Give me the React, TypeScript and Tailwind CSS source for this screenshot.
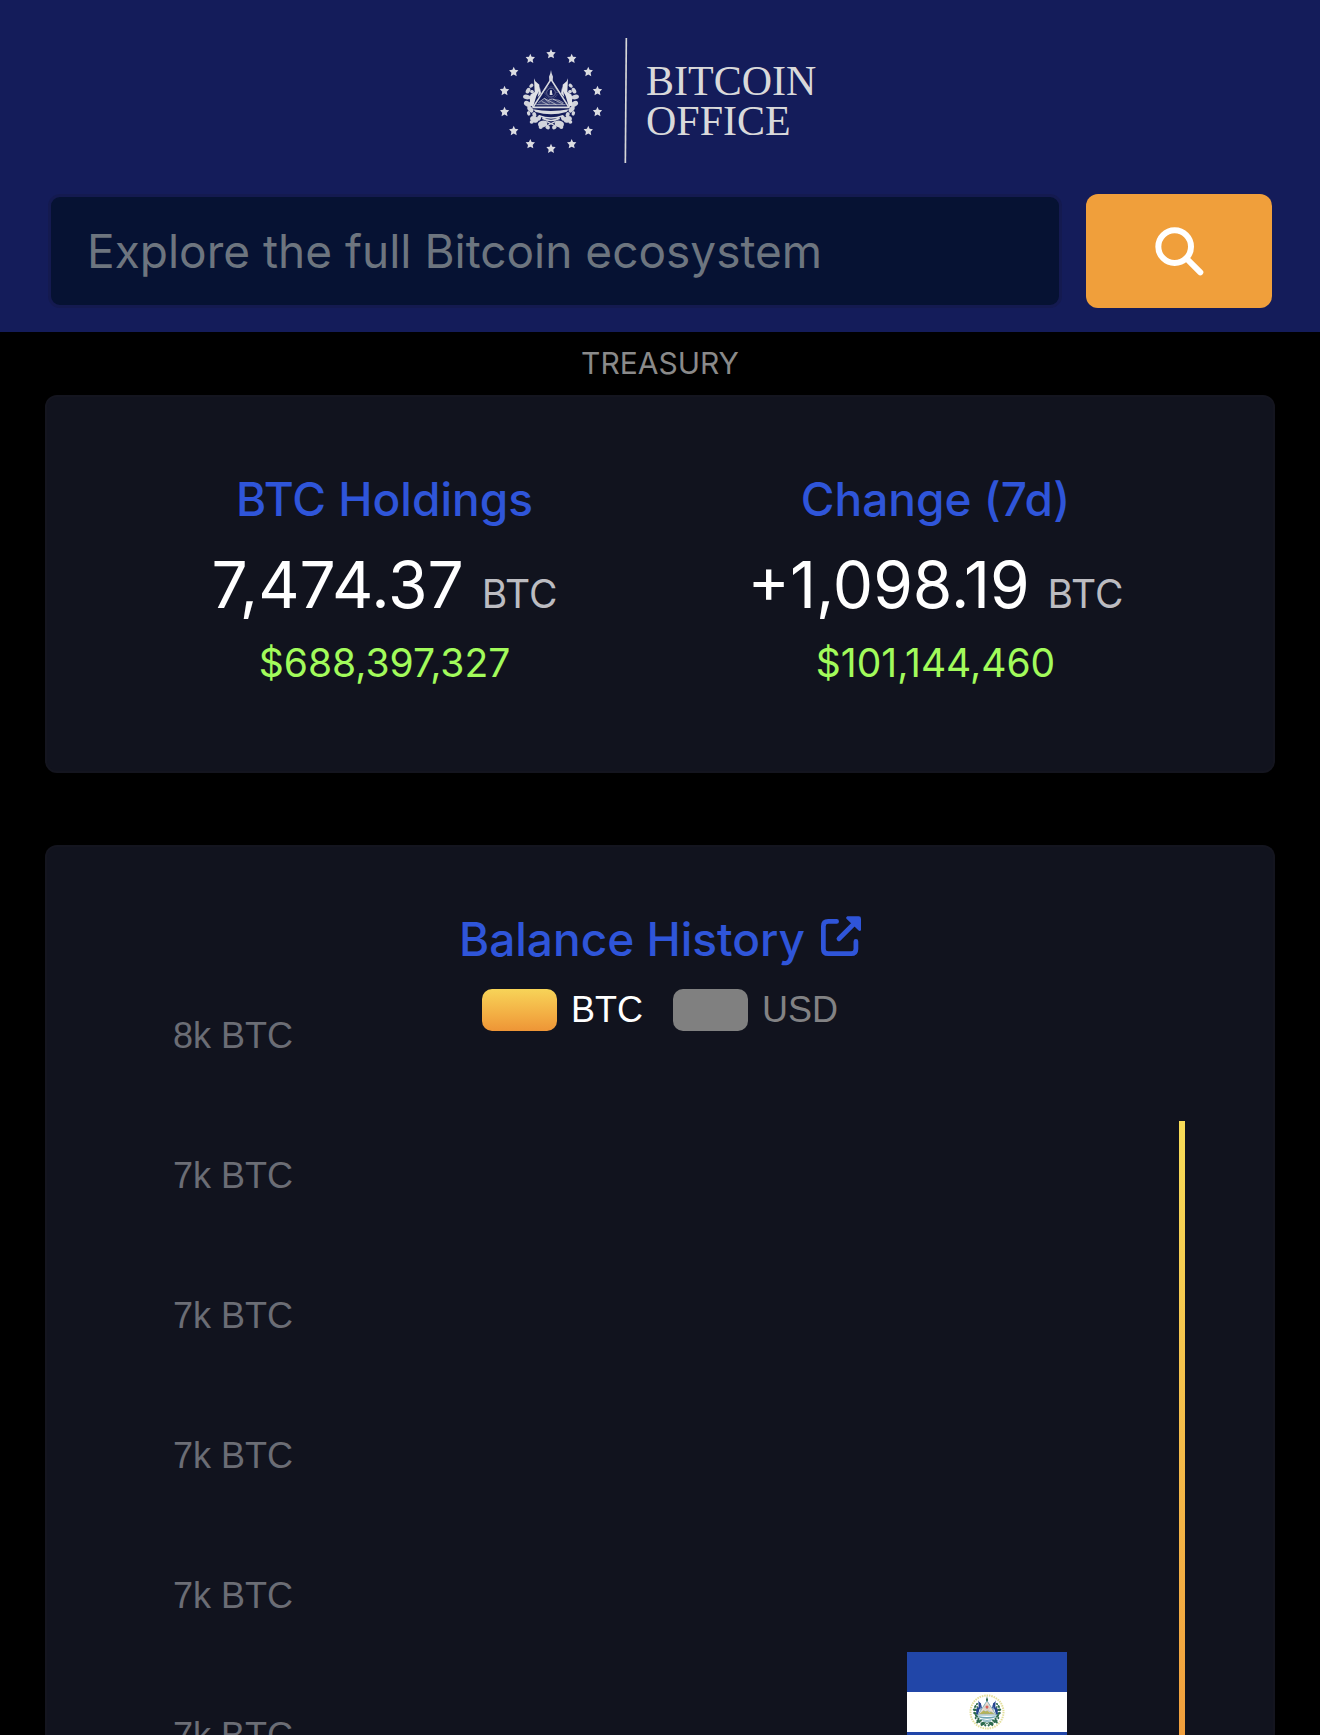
import React from "react";

const STAR =
  "M0 -15 L4 -6 L14 -5 L7 3 L9 13 L0 8 L-9 13 L-7 3 L-14 -5 L-4 -6 Z";

const LEAVES: [number, number, number, number, number][] = [
  [-59, -47, 7, 5, -40],
  [-69, -32, 9, 6, -60],
  [-57, -29, 6, 5, 20],
  [-73, -13, 11, 7, 10],
  [-61, -10, 6, 5, 60],
  [-70, 8, 12, 8, 30],
  [-62, 24, 11, 7, 50],
  [-67, 36, 7, 5, 70],
  [-50, 40, 8, 6, 70],
  [-50, 54, 13, 9, 20],
  [-58, 62, 6, 5, 0],
  [-36, 50, 6, 8, 20],
  [-25, 68, 14, 10, -15],
  [-31, 77, 6, 6, 0],
  [-10, 78, 7, 6, 30],
];

interface ArmsColors {
  leaf: string;
  flag: string;
  line: string;
  field: string;
  land: string;
}

function CoatOfArms({ leaf, flag, line, field, land }: ArmsColors) {
  const half = (
    <g>
      {LEAVES.map(([cx, cy, rx, ry, a], i) => (
        <ellipse key={i} cx={cx} cy={cy} rx={rx} ry={ry} fill={leaf} transform={`rotate(${a} ${cx} ${cy})`} />
      ))}
      <path d="M-51 -69 L-47 -60 L-35 -50 L-36 -30 L-44 -16 L-54 18 L-64 10 L-62 -20 L-49 -28 Z" fill={flag} />
      <path d="M-34 -46 L-30 -24 L-40 -12 Z" fill={flag} />
    </g>
  );
  return (
    <g>
      {half}
      <g transform="scale(-1 1)">{half}</g>
      <path d="M0 -94 L2 -84 L6 -74 L5 -62 L-5 -62 L-6 -74 L-2 -84 Z" fill={leaf} />
      <path d="M0 -66 L54 18 L-54 18 Z" fill={field} stroke={line} strokeWidth="5" strokeLinejoin="round" />
      <circle cx="0" cy="-26" r="13" fill="none" stroke={line} strokeWidth="2" opacity="0.6" />
      <circle cx="0" cy="-26" r="18" fill="none" stroke={line} strokeWidth="6" strokeDasharray="1 3" opacity="0.5" />
      <path d="M-3 -33 L3 -33 L3 -27 L5 -19 L-4 -19 Z" fill={line} />
      <path d="M-35 3 L-20 -9 L-8 -3 L2 -8 L14 3 L24 -2 L44 12 L-46 12 Z" fill={land} />
      <path
        d="M-38 4 L-20 -9 L-4 5 M-20 -9 L16 10 M-8 -4 L4 -7 L36 8 M6 -6 L24 -3 L38 5 M-44 10 H44 M-28 0 L-8 10"
        fill="none"
        stroke={line}
        strokeWidth="2.500"
        opacity="0.8"
      />
      <path d="M-54 24 Q0 34 54 24 L46 32 Q0 46 -46 32 Z" fill={line} />
      <path d="M-36 43 Q0 57 36 43 M-26 51 Q0 64 26 51" fill="none" stroke={line} strokeWidth="5" />
      <path d="M-14 60 L14 74 M14 60 L-14 74" stroke={leaf} strokeWidth="4" />
    </g>
  );
}

function LogoMark() {
  return (
    <svg viewBox="30 24 384 375" className="h-[125px] w-32" aria-hidden="true">
      {Array.from({ length: 14 }, (_, i) => {
        const a = (i * 2 * Math.PI) / 14;
        return (
          <path
            key={i}
            d={STAR}
            fill="#dcdde2"
            transform={`translate(${183 + 143 * Math.sin(a)} ${214 - 142 * Math.cos(a)})`}
          />
        );
      })}
      <g transform="translate(183 214)">
        <CoatOfArms leaf="#d2d4dc" flag="#e0e1e6" line="#d8dae0" field="#141c5a" land="#3d4577" />
      </g>
      <path d="M409 24 L406 399" stroke="#d6d6d8" strokeWidth="5" />
    </svg>
  );
}

function SearchIcon() {
  return (
    <svg viewBox="344 140 147 147" className="size-[49px]" fill="none" stroke="#fff" strokeWidth="18" strokeLinecap="round" aria-hidden="true">
      <circle cx="403" cy="199" r="49" />
      <path d="M440 236 L480 276" />
    </svg>
  );
}

function ExternalIcon() {
  return (
    <svg viewBox="1142 50 118 118" className="size-10" aria-hidden="true">
      <path
        d="M1188 66 H1163 Q1149 66 1149 80 V147 Q1149 161 1163 161 H1231 Q1245 161 1245 147 V125"
        fill="none"
        stroke="currentColor"
        strokeWidth="14"
        strokeLinecap="round"
      />
      <path d="M1195 117 L1240 72" stroke="currentColor" strokeWidth="14" strokeLinecap="round" />
      <path d="M1220 51 H1253 Q1260 51 1260 58 V91 Q1258 96 1253 93 L1217 58 Q1214 53 1220 51 Z" fill="currentColor" />
    </svg>
  );
}

function SalvadorFlag() {
  return (
    <svg viewBox="0 0 160 120" className="mt-[677px] h-[120px] w-40 shrink-0" role="img" aria-label="Flag of El Salvador">
      <rect width="160" height="120" fill="#2146a8" />
      <rect y="40" width="160" height="40" fill="#fff" />
      <circle cx="80" cy="60" r="16.500" fill="none" stroke="#e3df9b" strokeWidth="2" strokeDasharray="1.500 0.900" />
      <g transform="translate(80 60) scale(0.17)">
        <CoatOfArms leaf="#2d6a4c" flag="#24448f" line="#6fa6b5" field="#f3dfd0" land="#c9b640" />
      </g>
      <circle cx="80" cy="55" r="1.500" fill="#d9605a" />
    </svg>
  );
}

interface StatProps {
  title: string;
  value: string;
  usd: string;
}

function Stat({ title, value, usd }: StatProps) {
  return (
    <div className="flex flex-1 flex-col items-center whitespace-nowrap">
      <h2 className="text-[46px] leading-[72px] font-medium text-[#2f55d9]">{title}</h2>
      <p className="mt-[10px] text-[64px] leading-[80px] text-white">
        {value} <span className="text-[39px] leading-none text-[#bcbcc1]">BTC</span>
      </p>
      <p className="mt-[10px] text-[39px] leading-[56px] text-[#a2fb5b]">{usd}</p>
    </div>
  );
}

const TICKS = ["8k BTC", "7k BTC", "7k BTC", "7k BTC", "7k BTC", "7k BTC"];

export default function App() {
  return (
    <div className="flex h-screen flex-col overflow-hidden bg-black font-['Inter',sans-serif]">
      <header className="shrink-0 bg-[#141c5a] px-12 pt-[38px] pb-6">
        <a href="#" className="flex items-center justify-center gap-[18px]">
          <LogoMark />
          <span className="min-w-[174px] font-['Liberation_Serif',serif] text-[42px] leading-10 text-[#d9d9da]">
            BITCOIN
            <br />
            OFFICE
          </span>
        </a>
        <form className="mt-[31px] flex items-stretch gap-6" onSubmit={(e) => e.preventDefault()}>
          <input
            type="text"
            aria-label="Search"
            placeholder="Explore the full Bitcoin ecosystem"
            className="min-w-0 flex-1 rounded-xl border-[3px] border-[#141a50] bg-[#061233] px-9 text-[46px] text-white placeholder:text-[#6d757f] placeholder:opacity-100"
          />
          <button type="submit" aria-label="Search" className="flex h-[114px] w-[186px] items-center justify-center rounded-xl bg-[#f09f3b]">
            <SearchIcon />
          </button>
        </form>
      </header>

      <main className="flex min-h-0 flex-1 flex-col px-[45px]">
        <h1 className="shrink-0 text-center text-[30px] leading-[63px] text-[#8a8a8a]">TREASURY</h1>

        <section className="flex shrink-0 rounded-xl border-2 border-[#14151f] bg-[#11131e] px-[62px] pt-[66px] pb-20">
          <Stat title="BTC Holdings" value="7,474.37" usd="$688,397,327" />
          <Stat title="Change (7d)" value="+1,098.19" usd="$101,144,460" />
        </section>

        <section className="mt-[72px] flex min-h-0 flex-1 flex-col rounded-t-xl border-2 border-b-0 border-[#14151f] bg-[#11131e] pt-14">
          <h2 className="text-center text-[46px] leading-[72px] font-medium text-[#2f55d9]">
            <a href="#" className="inline-flex items-baseline gap-4">
              Balance History
              <ExternalIcon />
            </a>
          </h2>
          <div className="grid min-h-0 flex-1 font-['Liberation_Sans',sans-serif] text-[36px]">
            <div className="col-start-1 row-start-1 flex items-start justify-center gap-[30px] pt-[14px] leading-[42px]">
              <button type="button" className="flex items-center gap-[14px] text-white">
                <span className="h-[42px] w-[75px] rounded-[10px] bg-linear-to-b from-[#f7d458] to-[#ee9536]" />
                BTC
              </button>
              <button type="button" className="flex items-center gap-[14px] text-[#828284]">
                <span className="h-[42px] w-[75px] rounded-[10px] bg-[#808080]" />
                USD
              </button>
            </div>
            <div className="pointer-events-none col-start-1 row-start-1 flex min-h-0 overflow-hidden pr-[88px] pl-[126px]">
              <ul className="flex-1 pt-10 text-[#6b6d75]">
                {TICKS.map((tick, i) => (
                  <li key={i} className="h-[140px] leading-[42px]">
                    {tick}
                  </li>
                ))}
              </ul>
              <SalvadorFlag />
              <div className="mt-[146px] ml-28 h-[740px] w-[6px] shrink-0 bg-linear-to-b from-[#f8dc58] to-[#ee9237]" />
            </div>
          </div>
        </section>
      </main>
    </div>
  );
}
